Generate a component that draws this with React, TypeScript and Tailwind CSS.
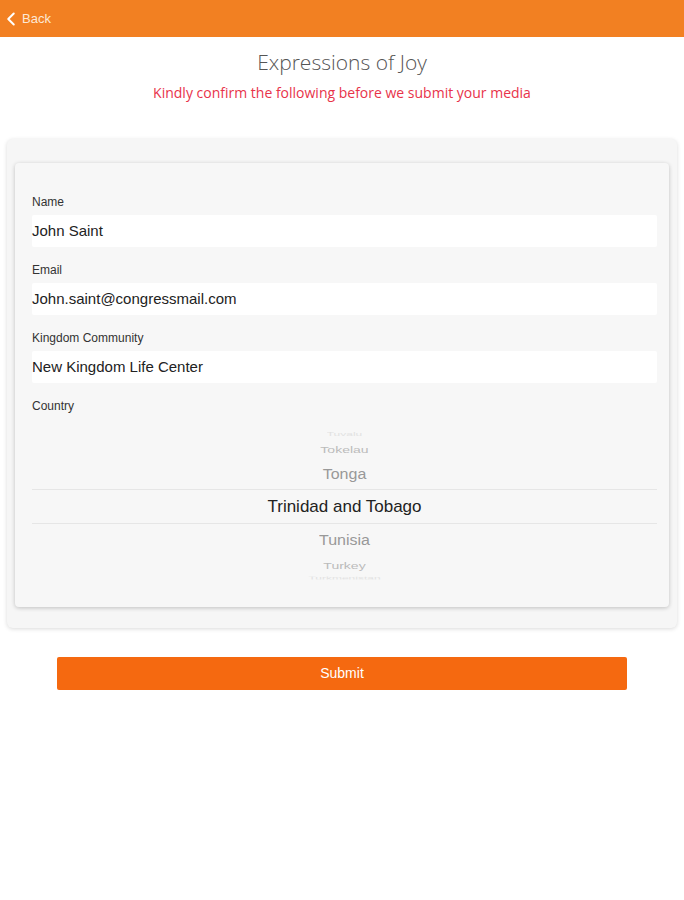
import { ChevronLeft } from "lucide-react";

const fields = [
  { label: "Name", value: "John Saint" },
  { label: "Email", value: "John.saint@congressmail.com" },
  { label: "Kingdom Community", value: "New Kingdom Life Center" },
];

export default function App() {
  return (
    <div className="min-h-[900px] bg-white font-['Liberation_Sans',Arial,sans-serif]">
      <div className="h-[37px] bg-[#f28022] flex items-center text-white">
        <ChevronLeft size={22} strokeWidth={2.2} />
        <span className="text-[13px] text-[#fde8d6]">Back</span>
      </div>

      <div className="text-center">
        <h1 className="mt-[10px] text-[21px] leading-[30px] font-light text-[#555] font-['Open_Sans',sans-serif]">
          Expressions of Joy
        </h1>
        <p className="mt-[7px] text-[14px] leading-[18px] text-[#e8334a] font-['Open_Sans',sans-serif]">
          Kindly confirm the following before we submit your media
        </p>
      </div>

      <div className="mx-[7px] mt-[37px] bg-[#f6f6f6] rounded-[6px] shadow-[0_1px_4px_rgba(0,0,0,0.15)] pt-[24px] pb-[21px] px-[8px]">
        <div className="bg-[#f7f7f7] rounded-[4px] shadow-[0_1px_4px_rgba(0,0,0,0.22)] pl-[17px] pr-[12px] pt-[32px] pb-[25px]">
          {fields.map((f) => (
            <div key={f.label} className="mb-[16px]">
              <div className="text-[12px] leading-[15px] text-[#333] mb-[5px]">{f.label}</div>
              <div className="h-[32px] bg-white rounded-[2px] flex items-center text-[15px] text-[#222]">
                {f.value}
              </div>
            </div>
          ))}
          <div className="text-[12px] leading-[15px] text-[#333]">Country</div>

          <div className="mt-[15px] flex flex-col items-center text-center">
            <div className="h-[10px] text-[12px] leading-[10px] text-[#e2e2e2] overflow-hidden scale-y-[0.4]">Tuvalu</div>
            <div className="h-[20px] text-[14px] leading-[20px] text-[#bbb] scale-y-[0.7]">Tokelau</div>
            <div className="h-[30px] text-[16px] leading-[30px] text-[#999] scale-y-[0.92]">Tonga</div>
            <div className="w-full h-[35px] border-y border-[#e6e6e6] text-[17px] leading-[33px] text-[#222]">
              Trinidad and Tobago
            </div>
            <div className="h-[32px] text-[16px] leading-[32px] text-[#999] scale-y-[0.92]">Tunisia</div>
            <div className="h-[18px] text-[14px] leading-[18px] text-[#bbb] scale-y-[0.7]">Turkey</div>
            <div className="h-[8px] text-[12px] leading-[8px] text-[#e2e2e2] overflow-hidden scale-y-[0.4]">Turkmenistan</div>
          </div>
        </div>
      </div>

      <div className="mx-[57px] mt-[29px]">
        <button className="w-full h-[33px] bg-[#f56910] rounded-[2px] text-white text-[14px]">
          Submit
        </button>
      </div>
    </div>
  );
}
